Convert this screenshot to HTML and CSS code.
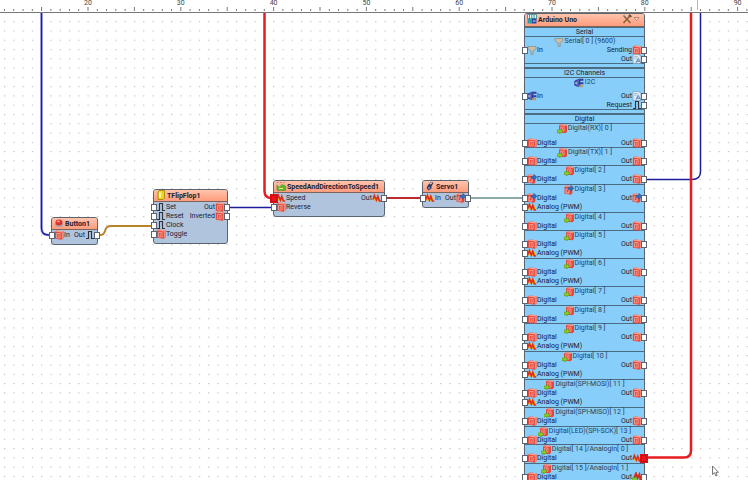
FILE: index.html
```html
<!DOCTYPE html>
<html lang="en">
<head>
    <meta charset="UTF-8">
    <meta name="viewport" content="width=device-width, initial-scale=1.0">
    <title>Arduino Uno</title>
    <link rel="stylesheet" href="styles.css">
</head>
<body>
<!-- icon set -->
<svg class="defs" width="0" height="0" aria-hidden="true">
    <symbol id="digital" viewBox="0 0 10 10">
        <path d="M.8 1.600L2.600.5 9.600 1.200V8.200L7.800 9.800.8 8.800z" fill="#e4483c"/>
        <path d="M.8 1.600L2.600.5 9.600 1.200 7.800 2.400z" fill="#f8a090"/>
        <path d="M7.800 2.400L9.600 1.200V8.200L7.800 9.800z" fill="#f08878"/>
        <path d="M2.500 3.500h3.600v4.400H2.500zM4.300 4.600v2.200" fill="none" stroke="#f8b8ac" stroke-width=".7"/>
    </symbol>
    <symbol id="digital-add" viewBox="0 0 10 10">
        <path d="M2 1.200L3.800.2 10 .9V7.800L8.400 9.300 2 8.400z" fill="#e4483c"/>
        <path d="M2 1.200L3.800.2 10 .9 8.400 2z" fill="#f8a090"/>
        <path d="M3.600 3h3.400v4.200H3.600zM5.300 4v2.200" fill="none" stroke="#f8b8ac" stroke-width=".7"/>
        <path d="M0 6h2.600V4.400l3.200 2.900-3.200 2.700V8.700H0z" fill="#88cc28" stroke="#4c8c18" stroke-width=".5"/>
    </symbol>
    <symbol id="digital-blue" viewBox="0 0 10 10">
        <path d="M.5 1.600L2.300.5 8.400 1.200V8.200L7 9.800.5 8.800z" fill="#e4483c"/>
        <path d="M.5 1.600L2.300.5 8.400 1.200 7 2.400z" fill="#f8a090"/>
        <path d="M2 4h3v4H2z" fill="none" stroke="#f8c4bc" stroke-width=".8"/>
        <path d="M4 2.200h2.700V.2L10 3.200 6.700 6.200V4.400H4z" fill="#2870c8" stroke="#184c94" stroke-width=".4"/>
    </symbol>
    <symbol id="analog" viewBox="0 0 10 10">
        <path d="M1 2.500h3v5H1z" fill="#f4b820"/>
        <path d="M5 4h3v4H5z" fill="#f4c020"/>
        <path d="M1 6.500L2.400 2.500 4.400 7 5.800 3.500 7.400 8 9.200 8" fill="none" stroke="#d8301c" stroke-width="1.700"/>
    </symbol>
    <symbol id="analog-add" viewBox="0 0 10 10">
        <path d="M2 6L4 1.500 5.600 6 7.400 2.500 8.600 8 10 8" fill="none" stroke="#d82c1c" stroke-width="2"/>
        <path d="M0 6h2.600V4.400l3.200 2.900-3.200 2.700V8.700H0z" fill="#88cc28" stroke="#4c8c18" stroke-width=".5"/>
    </symbol>
    <symbol id="clock" viewBox="0 0 10 10">
        <path d="M1 8.500H3.500V1.500h3v7H9" fill="none" stroke="#303038" stroke-width="1.100"/>
    </symbol>
    <symbol id="serial" viewBox="0 0 10 10">
        <path d="M1 1.500h8v2L6.200 6.500v3H4v-3L1 3.500z" fill="#b8b8b0" stroke="#848880" stroke-width=".6"/>
        <path d="M3 2v2M5 2v3M7 2v2" stroke="#e8c898" stroke-width=".9"/>
    </symbol>
    <symbol id="i2c" viewBox="0 0 10 10">
        <path d="M.3 3l3.400-2v8l-3.400-1.800zM4.200.8h5.300v2H6.400v1.500h3.100v2H6.400V9H4.200z" fill="#34409c"/>
        <path d="M1.200 4.200l2-.8v3.400l-2-.8z" fill="#a4a8d4"/>
        <path d="M5 7.200h4v2H5z" fill="#b89468"/>
    </symbol>
    <symbol id="doc" viewBox="0 0 10 10">
        <path d="M1 .5H7L9 2.400V9.500H1z" fill="#dce8f4" stroke="#7c94b0" stroke-width=".6"/>
        <path d="M2.300 2.600h3.600M2.300 4.200h2.500" stroke="#88a0bc" stroke-width=".6"/>
        <path d="M4 8.800L6.200 4.400l2.400 4.400M5 7.300h2.600" fill="none" stroke="#4c78b4" stroke-width=".9"/>
    </symbol>
    <symbol id="button" viewBox="0 0 10 10">
        <ellipse cx="5" cy="6.600" rx="4.400" ry="2.600" fill="#b8a4a4"/>
        <ellipse cx="5" cy="4.600" rx="3.500" ry="3" fill="#dc3030"/>
        <ellipse cx="4.400" cy="3.400" rx="1.700" ry=".9" fill="#ff9c94"/>
    </symbol>
    <symbol id="flipflop" viewBox="0 0 10 10">
        <path d="M2 1.500L3.500.5H8.500V8L7 9.500H2z" fill="#f0d818" stroke="#8c7408" stroke-width=".7"/>
        <path d="M3 2.500h2v5H3z" fill="#fff8b0"/>
    </symbol>
    <symbol id="speed" viewBox="0 0 10 10">
        <path d="M.5 1.500h2M4 1.500h2M7.500 1.500h1.500" stroke="#c88068"/>
        <path d="M.8 4l2.200 2.500 3-3 3.500 1.500V9.500H1z" fill="#60b430" stroke="#3c8c1c" stroke-width=".5"/>
        <path d="M3 7.500h4" stroke="#e0f070"/>
    </symbol>
    <symbol id="servo" viewBox="0 0 10 10">
        <path d="M3 4L6 .8l2.500 1L6.500 5.500v2L3.500 9.500 1.500 7z" fill="#343c60"/>
        <path d="M5 3l2-1.400" stroke="#e8f0ff" stroke-width="1.100"/>
        <circle cx="4" cy="7" r="1.100" fill="#7c98d0"/>
    </symbol>
    <symbol id="board" viewBox="0 0 10 10">
        <path d="M.5.5h9v4.200h-9z" fill="#e4f4f4" stroke="#188088" stroke-width=".7"/>
        <path d="M.5 5h5v4.500h-5z" fill="#28a0ac"/>
        <path d="M2.500 1v4M4.800 1v4M7.100 1v4" stroke="#188088" stroke-width=".8"/>
        <path d="M5 4.500h4.500v5H5z" fill="#2c4ca0"/>
        <path d="M6 7h2.500" stroke="#c8dcff"/>
    </symbol>
    <symbol id="tools" viewBox="0 0 10 10">
        <path d="M1.500 1.500l7 7.500" stroke="#7c6450" stroke-width="1.500"/>
        <path d="M8.800 1L1.500 9" stroke="#94602c" stroke-width="1.700"/>
        <path d="M6.800.8l2.600 2.200" stroke="#505450" stroke-width="1.600"/>
        <path d="M.8 2.600l2-1.800" stroke="#a8a090" stroke-width="1.300"/>
    </symbol>
    <symbol id="chevron" viewBox="0 0 10 10">
        <path d="M2 3.500h5L4.500 6.500z" fill="#ffd8c8" stroke="#a87868" stroke-width=".8"/>
    </symbol>
</svg>

<div class="ruler">
    <svg id="ruler" width="100%" height="13" aria-hidden="true"></svg>
</div>

<main class="canvas">
    <svg class="wires" width="100%" height="100%" aria-hidden="true">
        <defs>
            <pattern id="grid" x="4" y="21.100" width="9.280" height="9.280" patternUnits="userSpaceOnUse">
                <path d="M0 .6h1.200" stroke="#bcbcc0" stroke-width="1.200"/>
            </pattern>
        </defs>
        <rect y="13" width="100%" height="100%" fill="url(#grid)"/>
        <g fill="none">
            <path class="wire-halo" d="M41.500 13V228q0 7 7 7H51"/>
            <path class="wire-blue" d="M41.500 13V228q0 7 7 7H51"/>
            <path class="wire-orange" d="M97 235h3q4 0 5-4 1-5 6-5H153"/>
            <path class="wire-blue" d="M227 207.500H273"/>
            <path class="wire-red" d="M264.500 13V191q0 7 7 7H275"/>
            <path class="wire-thin" d="M385 198H422"/>
            <path class="wire-teal" d="M468 198H524"/>
            <path class="wire-blue" d="M644 179.500H692q8.500 0 8.500-8V13"/>
            <path class="wire-red" d="M644 457.500H684q7 0 7-7V13"/>
        </g>
    </svg>

    <section class="node node-button">
        <h2><svg class="icon"><use href="#button"/></svg>Button1</h2>
        <div class="row">
            <span class="pin in"><svg class="icon"><use href="#digital"/></svg>In</span>
            <span class="pin out">Out<svg class="icon"><use href="#clock"/></svg></span>
        </div>
    </section>

    <section class="node node-flipflop">
        <h2><svg class="icon"><use href="#flipflop"/></svg>TFlipFlop1</h2>
        <div class="row">
            <span class="pin in"><svg class="icon"><use href="#clock"/></svg>Set</span>
            <span class="pin out">Out<svg class="icon"><use href="#digital"/></svg></span>
        </div>
        <div class="row">
            <span class="pin in"><svg class="icon"><use href="#clock"/></svg>Reset</span>
            <span class="pin out">Inverted<svg class="icon"><use href="#digital"/></svg></span>
        </div>
        <div class="row">
            <span class="pin in"><svg class="icon"><use href="#clock"/></svg>Clock</span>
        </div>
        <div class="row">
            <span class="pin in"><svg class="icon"><use href="#digital"/></svg>Toggle</span>
        </div>
    </section>

    <section class="node node-speed">
        <h2><svg class="icon"><use href="#speed"/></svg>SpeedAndDirectionToSpeed1</h2>
        <div class="row">
            <span class="pin in active"><svg class="icon"><use href="#analog"/></svg>Speed</span>
            <span class="pin out">Out<svg class="icon"><use href="#analog"/></svg></span>
        </div>
        <div class="row">
            <span class="pin in"><svg class="icon"><use href="#digital"/></svg>Reverse</span>
        </div>
    </section>

    <section class="node node-servo">
        <h2><svg class="icon"><use href="#servo"/></svg>Servo1</h2>
        <div class="row">
            <span class="pin in"><svg class="icon"><use href="#analog"/></svg>In</span>
            <span class="pin out">Out<svg class="icon"><use href="#digital-blue"/></svg></span>
        </div>
    </section>

    <section class="node node-board">
        <h2>
            <svg class="icon"><use href="#board"/></svg>Arduino Uno
            <span class="tools">
                <svg class="icon"><use href="#tools"/></svg>
                <svg class="icon"><use href="#chevron"/></svg>
            </span>
        </h2>

        <div class="group">
            <h3>Serial</h3>
            <h4><svg class="icon"><use href="#serial"/></svg>Serial[ 0 ] (9600)</h4>
            <div class="row">
                <span class="pin in"><svg class="icon"><use href="#serial"/></svg>In</span>
                <span class="pin out">Sending<svg class="icon"><use href="#digital"/></svg></span>
            </div>
            <div class="row">
                <span class="pin out">Out<svg class="icon"><use href="#doc"/></svg></span>
            </div>
        </div>

        <div class="group">
            <h3>I2C Channels</h3>
            <h4 class="spaced"><svg class="icon"><use href="#i2c"/></svg>I2C</h4>
            <div class="row">
                <span class="pin in"><svg class="icon"><use href="#i2c"/></svg>In</span>
                <span class="pin out">Out<svg class="icon"><use href="#doc"/></svg></span>
            </div>
            <div class="row">
                <span class="pin out">Request<svg class="icon"><use href="#clock"/></svg></span>
            </div>
        </div>

        <div class="group last">
            <h3>Digital</h3>
            <ul class="channels" id="channels"></ul>
        </div>
    </section>

    <svg class="cursor" viewBox="0 0 8 12" aria-hidden="true">
        <path d="M1.500 1v8.500l2-1.800L4.800 11l1.300-.6L4.900 7.300H7.500z" fill="#fff" stroke="#555" stroke-width=".8"/>
    </svg>
</main>

<script src="script.js"></script>
</body>
</html>
```
FILE: styles.css
```css
* {
    box-sizing: border-box;
}

body {
    margin: 0;
    background: #fff;
    color: #202030;
    font-family: Roboto, "Liberation Sans", Arial, sans-serif;
    font-size: 7px;
    line-height: 9px;
    min-height: 100vh;
    overflow: hidden;
}

h2, h3, h4, ul {
    margin: 0;
    padding: 0;
    font-size: inherit;
    font-weight: normal;
}

.defs {
    position: absolute;
}

.ruler {
    height: 13px;
    border-bottom: 1px solid #777;
    overflow: hidden;
}

.ruler svg {
    display: block;
}

.ruler text {
    font-size: 7px;
    fill: #444;
    text-anchor: middle;
}

/* node editor surface, covers the whole window under the ruler */
.canvas {
    position: absolute;
    inset: 0;
    overflow: hidden;
}

.wires {
    position: absolute;
    inset: 0;
}

.wire-halo {
    stroke: #c4c4f4;
    stroke-width: 3;
}

.wire-blue {
    stroke: #1c1c9c;
    stroke-width: 1.5;
}

.wire-orange {
    stroke: #b88428;
    stroke-width: 2;
}

.wire-red {
    stroke: #e81c20;
    stroke-width: 2.5;
}

.wire-thin {
    stroke: #bc2c2c;
    stroke-width: 2;
}

.wire-teal {
    stroke: #8cacac;
    stroke-width: 2;
}

/* nodes */
.node {
    position: absolute;
    padding-bottom: 5px;
    border: 1px solid #5c6470;
    border-radius: 3px;
    background: #b0c4de;
    white-space: nowrap;
}

.node h2 {
    display: flex;
    align-items: flex-start;
    gap: 1px;
    height: 12px;
    padding: 0 2px;
    border-bottom: 1px solid #7c645c;
    border-radius: 2px 2px 0 0;
    background: linear-gradient(#ffc4ac, #ff9c7c);
    font-weight: bold;
    line-height: 13px;
}

.node-button {
    left: 51px;
    top: 217px;
    width: 47px;
}

.node-flipflop {
    left: 153px;
    top: 189px;
    width: 75px;
}

.node-speed {
    left: 273px;
    top: 180px;
    width: 112px;
}

.node-servo {
    left: 422px;
    top: 180px;
    width: 47px;
}

.node-board {
    left: 524px;
    top: 13px;
    width: 121px;
    background: #87cefa;
}

.node-board h2 {
    height: 13px;
}

.tools {
    display: flex;
    margin-left: auto;
}

.icon {
    flex: none;
    width: 10px;
    height: 10px;
}

.row {
    display: flex;
    height: 9px;
}

.pin {
    position: relative;
    display: flex;
    align-items: flex-start;
    padding: 0 2px;
    line-height: 11px;
}

.pin.out {
    margin-left: auto;
}

.pin::before {
    content: "";
    position: absolute;
    top: 2px;
    left: -3px;
    width: 4px;
    height: 5px;
    border: 1px solid #5c6470;
    background: #fff;
}

.pin.out::before {
    left: auto;
    right: -3px;
}

.pin.active::before {
    border-color: #c01018;
    background: #f01018;
    outline: 1px solid #e01018;
}

/* board channel groups */
.group {
    border-bottom: 1px solid #4c6c84;
    margin-bottom: 3px;
}

.group + .group {
    border-top: 1px solid #4c6c84;
}

.group.last {
    margin-bottom: 0;
}

.group h3 {
    height: 10px;
    border-top: 1px solid #4c6c84;
    border-bottom: 1px solid #4c6c84;
    line-height: 8px;
    text-align: center;
}

.group h4 {
    display: flex;
    align-items: flex-start;
    justify-content: center;
    gap: 1px;
    height: 8px;
    color: #24425c;
}

.group h4.spaced {
    margin-bottom: 5px;
}

.channels {
    display: flex;
    flex-direction: column;
    min-height: 357px;
    list-style: none;
}

.channel {
    flex-grow: 1;
    border-top: 1px solid #4c6c84;
}

.channel:first-child {
    flex-grow: 0;
    border-top: 0;
}

.channel:first-child h4 {
    margin-bottom: 6px;
}

.channel.pwm {
    flex-grow: 0;
    padding-bottom: 1px;
}

.cursor {
    position: absolute;
    left: 711px;
    top: 465px;
    width: 8px;
    height: 12px;
}
```
FILE: script.js
```js
const channels = [
    { name: 'Digital(RX)[ 0 ]' },
    { name: 'Digital(TX)[ 1 ]' },
    { name: 'Digital[ 2 ]', input: 'digital-blue' },
    { name: 'Digital[ 3 ]', title: 'digital-blue', input: 'digital-blue', output: 'digital-blue', pwm: true },
    { name: 'Digital[ 4 ]' },
    { name: 'Digital[ 5 ]', pwm: true },
    { name: 'Digital[ 6 ]', pwm: true },
    { name: 'Digital[ 7 ]' },
    { name: 'Digital[ 8 ]' },
    { name: 'Digital[ 9 ]', pwm: true },
    { name: 'Digital[ 10 ]', pwm: true },
    { name: 'Digital(SPI-MOSI)[ 11 ]', pwm: true },
    { name: 'Digital(SPI-MISO)[ 12 ]' },
    { name: 'Digital(LED)(SPI-SCK)[ 13 ]' },
    { name: 'Digital[ 14 ]/AnalogIn[ 0 ]', output: 'analog', active: true },
    { name: 'Digital[ 15 ]/AnalogIn[ 1 ]', output: 'analog-add' }
];

function icon(name) {
    return `<svg class="icon"><use href="#${name}"/></svg>`;
}

document.getElementById('channels').innerHTML = channels.map(c => `
    <li class="channel${c.pwm ? ' pwm' : ''}">
        <h4>${icon(c.title || 'digital-add')}${c.name}</h4>
        <div class="row">
            <span class="pin in">${icon(c.input || 'digital')}Digital</span>
            <span class="pin out${c.active ? ' active' : ''}">Out${icon(c.output || 'digital')}</span>
        </div>
        ${c.pwm ? `<div class="row"><span class="pin in">${icon('analog')}Analog (PWM)</span></div>` : ''}
    </li>`).join('');

// ruler: one tick per grid unit, a longer one every 5, a number every 10
const unit = 9.28;
const origin = 88 - 20 * unit;
let marks = '';
for (let i = 11; origin + i * unit < window.innerWidth; i++) {
    const x = origin + i * unit;
    marks += `<path d="M${x} ${i % 5 ? 9 : 7}V11" stroke="#777"/>`;
    if (i % 10 === 0) {
        marks += `<text x="${x}" y="5">${i}</text>`;
    }
}
marks += '<path d="M697.5 0V10" stroke="#f0a0a8"/>';
document.getElementById('ruler').innerHTML = marks;
```
